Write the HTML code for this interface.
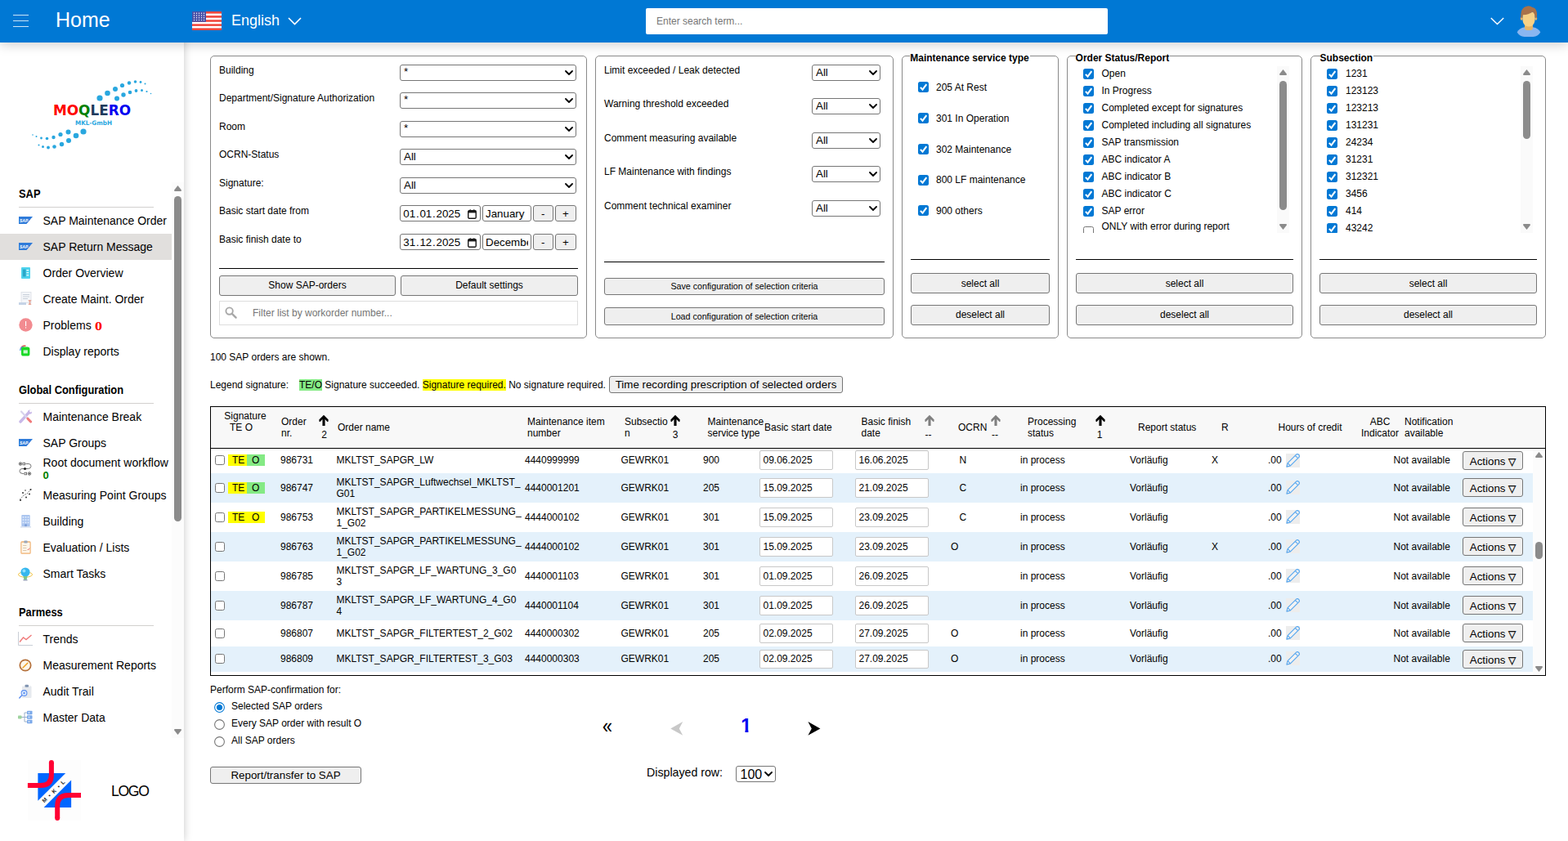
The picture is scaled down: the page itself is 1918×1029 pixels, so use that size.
<!DOCTYPE html>
<html lang="en">
<head>
<meta charset="utf-8">
<title>Home</title>
<style>

*{box-sizing:border-box;margin:0;padding:0}
svg{display:block}
html,body{width:1918px;height:1029px;overflow:hidden;background:#fff}
body{font-family:"Liberation Sans",sans-serif;font-size:12px;color:#000;position:relative}
.t{position:absolute;white-space:nowrap}
.hdr{position:absolute;left:0;top:0;width:1918px;height:52px;background:#0078d4;box-shadow:0 3px 13px rgba(0,0,0,.18);z-index:5}
.side{position:absolute;left:0;top:52px;width:225px;height:977px;background:#fff;box-shadow:0 0 10px rgba(0,0,0,.22);z-index:3}
.main{position:absolute;left:0;top:0;width:1918px;height:1029px}
.panel{position:absolute;border:1px solid #8a8a8a;border-radius:5px}
.sel{position:absolute;border:1px solid #767676;border-radius:3px;background:#fff;white-space:nowrap;overflow:hidden}
.sel .chev{position:absolute;right:3px;top:50%;margin-top:-3px}
.btn{position:absolute;border:1px solid #767676;border-radius:3px;background:#efefef;text-align:center;white-space:nowrap}
.inp{position:absolute;border:1px solid #767676;border-radius:3px;background:#fff;white-space:nowrap;overflow:hidden}
.dinp{position:absolute;border:1px solid #c8c8c8;border-radius:2px;background:#fff;white-space:nowrap;overflow:hidden}
.cb{position:absolute;border:1px solid #767676;border-radius:2.5px;background:#fff}
.cb.on{border:none;background:#0078d4}
.cb svg{display:block}
.hr{position:absolute;height:1px;background:#000}
.nav{position:absolute;left:0;width:210px;height:32px}
.nav.sel-item{background:#e1dfdd}
.leg{position:absolute;background:#fff;font-weight:bold;font-size:12px;line-height:14px;white-space:nowrap;padding:0 1px 0 0}

</style>
</head>
<body>
<div class="hdr">
<div class="" style="position:absolute;left:16px;top:17.5px;width:19px;height:1.5px;background:rgba(255,255,255,.8)"></div>
<div class="" style="position:absolute;left:16px;top:24.5px;width:19px;height:1.5px;background:rgba(255,255,255,.8)"></div>
<div class="" style="position:absolute;left:16px;top:31.5px;width:19px;height:1.5px;background:rgba(255,255,255,.8)"></div>
<div class="t " style="left:68px;top:8.5px;font-size:25px;line-height:30px;color:#fff;">Home</div>
<svg style="position:absolute;left:235px;top:14px" width="36" height="23" viewBox="0 0 36 23">
<rect width="36" height="23" fill="#fff"/>
<g fill="#f0483e"><rect y="0" width="36" height="2.6"/><rect y="5.1" width="36" height="2.6"/><rect y="10.2" width="36" height="2.6"/><rect y="15.3" width="36" height="2.6"/><rect y="20.4" width="36" height="2.6"/></g>
<rect width="17" height="12.8" fill="#4a52a8"/>
<g fill="#fff"><circle cx="2.5" cy="2.2" r=".7"/><circle cx="5.5" cy="2.2" r=".7"/><circle cx="8.5" cy="2.2" r=".7"/><circle cx="11.5" cy="2.2" r=".7"/><circle cx="14.5" cy="2.2" r=".7"/>
<circle cx="2.5" cy="5" r=".7"/><circle cx="5.5" cy="5" r=".7"/><circle cx="8.5" cy="5" r=".7"/><circle cx="11.5" cy="5" r=".7"/><circle cx="14.5" cy="5" r=".7"/>
<circle cx="2.5" cy="7.8" r=".7"/><circle cx="5.5" cy="7.8" r=".7"/><circle cx="8.5" cy="7.8" r=".7"/><circle cx="11.5" cy="7.8" r=".7"/><circle cx="14.5" cy="7.8" r=".7"/>
<circle cx="2.5" cy="10.6" r=".7"/><circle cx="5.5" cy="10.6" r=".7"/><circle cx="8.5" cy="10.6" r=".7"/><circle cx="11.5" cy="10.6" r=".7"/><circle cx="14.5" cy="10.6" r=".7"/></g>
</svg>
<div class="t " style="left:283px;top:13.5px;font-size:18px;line-height:22px;color:#fff;">English</div>
<svg style="position:absolute;left:352px;top:21px" width="17" height="10" viewBox="0 0 17 10"><path d="M1 1 L8.5 8.5 L16 1" fill="none" stroke="#fff" stroke-width="1.6"/></svg>
<div class="" style="position:absolute;left:790px;top:10px;width:565px;height:32px;background:#fff;border-radius:2px"></div>
<div class="t " style="left:803px;top:19px;font-size:12px;line-height:14px;color:#757575;">Enter search term...</div>
<svg style="position:absolute;left:1823px;top:21px" width="17" height="10" viewBox="0 0 17 10"><path d="M0.8 1 L8.5 8.6 L16.2 1" fill="none" stroke="#fff" stroke-width="1.4"/></svg>
<svg style="position:absolute;left:1855px;top:6px" width="30" height="40" viewBox="0 0 30 40">
<path d="M0.7 33.4 Q3 28.6 10 27.3 L20 27.3 Q27 28.6 29.3 33.4 Q26 38.6 20.5 39 L9.5 39 Q4 38.6 0.7 33.4 Z" fill="#8ab6f0"/>
<path d="M10 23 L10 27.5 Q10 30.9 13 30.9 L17 30.9 Q20 30.9 20 27.5 L20 23 Z" fill="#e6b566"/>
<ellipse cx="6.2" cy="16.6" rx="1.4" ry="2.2" fill="#e9b667"/><ellipse cx="23.8" cy="16.6" rx="1.4" ry="2.2" fill="#e9b667"/>
<path d="M7.5 12 L7.5 18 Q7.5 23 11 25.4 Q15 27.6 19 25.4 Q22.5 23 22.5 18 L22.5 8 Z" fill="#f7d186"/>
<path d="M5.6 16.4 Q4.2 6.5 9.6 2.8 Q15 -0.6 19.6 3 Q23.4 3.6 24.6 8 Q25.6 12 24.4 16.4 L22.6 15.4 Q22.8 11 19.6 8.4 Q15 12 7.9 12.2 Q7.2 13.8 7.4 15.4 Z" fill="#a8714a"/>
</svg>
</div>
<div class="side" style="top:0;height:1029px">
<svg style="position:absolute;left:36px;top:96px" width="154" height="90" viewBox="0 0 154 90">
<g fill="#29a7df">
<circle cx="86" cy="24" r="3.6"/><circle cx="95.5" cy="18" r="3.3"/><circle cx="105" cy="13" r="3"/><circle cx="113.5" cy="8.5" r="2.6"/><circle cx="122" cy="5.5" r="2.2"/><circle cx="129.5" cy="4" r="1.8"/><circle cx="136" cy="4.5" r="1.4"/><circle cx="141.5" cy="6.5" r="1"/>
<circle cx="107" cy="24.5" r="3"/><circle cx="115" cy="20" r="2.7"/><circle cx="123" cy="17" r="2.3"/><circle cx="130.5" cy="15" r="1.9"/><circle cx="137.5" cy="14.5" r="1.5"/><circle cx="143.5" cy="16" r="1.1"/><circle cx="148.5" cy="18.5" r=".8"/>
<circle cx="66" cy="65" r="3.6"/><circle cx="57" cy="70" r="3.3"/><circle cx="47.5" cy="65.5" r="3"/><circle cx="38" cy="68.5" r="2.6"/><circle cx="29.5" cy="72" r="2.2"/><circle cx="21.5" cy="73.5" r="1.8"/><circle cx="14.5" cy="73" r="1.4"/><circle cx="8.5" cy="71" r="1"/><circle cx="4" cy="69" r=".8"/>
<circle cx="48" cy="76" r="3"/><circle cx="39.5" cy="80.5" r="2.7"/><circle cx="30.5" cy="83.5" r="2.3"/><circle cx="23" cy="84.5" r="1.9"/><circle cx="16.5" cy="83.5" r="1.5"/><circle cx="11.5" cy="81.5" r="1"/>
</g>
<text x="29" y="45" font-family="DejaVu Sans, Liberation Sans, sans-serif" font-weight="bold" font-size="17.5" textLength="95" lengthAdjust="spacingAndGlyphs"><tspan fill="#ff0000">MO</tspan><tspan fill="#008000">Q</tspan><tspan fill="#1d3a5c">LE</tspan><tspan fill="#0000f0">RO</tspan></text>
<text x="56" y="57" font-family="DejaVu Sans, Liberation Sans, sans-serif" font-weight="bold" font-size="7.5" fill="#29a7df" textLength="45" lengthAdjust="spacingAndGlyphs">MKL-GmbH</text>
</svg>
<div class="t " style="left:23px;top:228.5px;font-size:14px;line-height:16px;font-weight:bold;transform:scaleX(0.92);transform-origin:0 50%;">SAP</div>
<div class="" style="position:absolute;left:23px;top:253px;width:165px;height:1px;background:#d2d0ce"></div>
<div style="position:absolute;left:22.5px;top:265px;width:17px;height:9px"><svg width="17" height="9" viewBox="0 0 17 9"><path d="M0 0 H17 L9.5 9 H0Z" fill="#2f7bd9"/><text x="1" y="6.9" font-family="Liberation Sans, sans-serif" font-weight="bold" font-style="italic" font-size="5.6" fill="#fff" textLength="10.2" lengthAdjust="spacingAndGlyphs">SAP</text></svg></div>
<div class="t " style="left:52.5px;top:261px;font-size:14px;line-height:18px;">SAP Maintenance Order</div>
<div class="" style="position:absolute;left:0px;top:286px;width:210px;height:32px;background:#e1dfdd"></div>
<div style="position:absolute;left:22.5px;top:297px;width:17px;height:9px"><svg width="17" height="9" viewBox="0 0 17 9"><path d="M0 0 H17 L9.5 9 H0Z" fill="#2f7bd9"/><text x="1" y="6.9" font-family="Liberation Sans, sans-serif" font-weight="bold" font-style="italic" font-size="5.6" fill="#fff" textLength="10.2" lengthAdjust="spacingAndGlyphs">SAP</text></svg></div>
<div class="t " style="left:52.5px;top:293px;font-size:14px;line-height:18px;">SAP Return Message</div>
<div style="position:absolute;left:25.5px;top:327px;width:11px;height:14px"><svg width="11" height="14" viewBox="0 0 12 14" preserveAspectRatio="none"><rect width="12" height="14" rx="1" fill="#4fd3ee"/><rect x="2" y="2.5" width="4" height="9" fill="#2aa7c8"/><rect x="7" y="3" width="3" height="1.3" fill="#e9fbff"/><rect x="7" y="6" width="3" height="1.3" fill="#e9fbff"/><rect x="7" y="9" width="3" height="1.3" fill="#e9fbff"/></svg></div>
<div class="t " style="left:52.5px;top:325px;font-size:14px;line-height:18px;">Order Overview</div>
<div style="position:absolute;left:22.5px;top:357px;width:17px;height:17px"><svg width="17" height="17" viewBox="0 0 17 17"><rect x="3" y="0.5" width="12" height="13" fill="#f4f6f9" stroke="#d6dbe3" stroke-width=".7"/><rect x="5" y="3" width="8" height="1" fill="#c9d0da"/><rect x="5" y="5.5" width="8" height="1" fill="#c9d0da"/><rect x="5" y="8" width="6" height="1" fill="#c9d0da"/><path d="M0 13 H9 V16 H0Z" fill="#c5d3e6"/><path d="M11.5 10 h4 l-1.5 3 l1.5 3 h-4 l1.5 -3z" fill="#e6a89a"/></svg></div>
<div class="t " style="left:52.5px;top:357px;font-size:14px;line-height:18px;">Create Maint. Order</div>
<div style="position:absolute;left:22.5px;top:389px;width:17px;height:17px"><svg width="17" height="17" viewBox="0 0 17 17"><circle cx="8.5" cy="8.5" r="8.2" fill="#f28b90"/><rect x="8" y="4" width="1.1" height="6" fill="#fff"/><rect x="8" y="11.3" width="1.1" height="1.3" fill="#fff"/></svg></div>
<div class="t " style="left:52.5px;top:389px;font-size:14px;line-height:18px;">Problems <span style="font-family:'Liberation Serif',serif;font-weight:bold;color:#f00;font-size:15.5px;line-height:10px;position:relative;top:1px;display:inline-block;transform:scaleX(1.16);transform-origin:0 50%">0</span></div>
<div style="position:absolute;left:24px;top:422px;width:14px;height:15px"><svg width="14" height="15" viewBox="0 0 14 15"><path d="M1.6 5.5 Q2 0.8 7.5 1.2" fill="none" stroke="#e0605a" stroke-width="1.6"/><path d="M0.8 7 Q0.6 3 4.5 2.4" fill="none" stroke="#5b8def" stroke-width="1.3"/><rect x="2" y="2.4" width="10.4" height="11.2" rx="2.6" fill="#19d926"/><rect x="4.6" y="6.4" width="5.2" height="4" fill="#c9f7cf"/></svg></div>
<div class="t " style="left:52.5px;top:421px;font-size:14px;line-height:18px;">Display reports</div>
<div class="t " style="left:23px;top:468.5px;font-size:14px;line-height:16px;font-weight:bold;transform:scaleX(0.92);transform-origin:0 50%;">Global Configuration</div>
<div class="" style="position:absolute;left:23px;top:493px;width:165px;height:1px;background:#d2d0ce"></div>
<div style="position:absolute;left:22.5px;top:501px;width:17px;height:17px"><svg width="17" height="17" viewBox="0 0 17 17"><path d="M2 15 L13 3" stroke="#c8b8e8" stroke-width="3.4" stroke-linecap="round"/><path d="M3 2.5 L14.5 15" stroke="#d8d2ec" stroke-width="2.2" stroke-linecap="round"/><path d="M11 11.2 L14.6 15" stroke="#f07a7a" stroke-width="3" stroke-linecap="round"/><circle cx="13.5" cy="3" r="2.6" fill="#c8b8e8"/><circle cx="14.6" cy="2" r="1.4" fill="#fff"/></svg></div>
<div class="t " style="left:52.5px;top:501px;font-size:14px;line-height:18px;">Maintenance Break</div>
<div style="position:absolute;left:22.5px;top:537px;width:17px;height:9px"><svg width="17" height="9" viewBox="0 0 17 9"><path d="M0 0 H17 L9.5 9 H0Z" fill="#2f7bd9"/><text x="1" y="6.9" font-family="Liberation Sans, sans-serif" font-weight="bold" font-style="italic" font-size="5.6" fill="#fff" textLength="10.2" lengthAdjust="spacingAndGlyphs">SAP</text></svg></div>
<div class="t " style="left:52.5px;top:533px;font-size:14px;line-height:18px;">SAP Groups</div>
<div style="position:absolute;left:22px;top:565px;width:18px;height:17px"><svg width="18" height="17" viewBox="0 0 18 17"><g fill="none" stroke="#555" stroke-width=".8"><circle cx="3" cy="2.5" r="1.8"/><rect x="6" y="1.2" width="2.6" height="2.6"/><path d="M9.5 2.5 H13 Q16 2.5 16 5.5 Q16 8.5 12 8.5 H5 Q2 8.5 2 11.5 Q2 14.5 6 14.5 H7"/><rect x="8" y="13.2" width="2.6" height="2.6"/><circle cx="14" cy="14.5" r="1.8"/></g><circle cx="3" cy="2.5" r=".9" fill="#333"/><circle cx="14" cy="14.5" r=".9" fill="#333"/><circle cx="8.5" cy="8.5" r="1.6" fill="#222"/></svg></div>
<div class="t " style="left:52.5px;top:558px;font-size:14px;line-height:16px;">Root document workflow</div>
<div class="t " style="left:52.5px;top:574px;font-size:13px;line-height:16px;color:#008000;font-weight:bold;">0</div>
<div style="position:absolute;left:22.5px;top:597px;width:17px;height:17px"><svg width="17" height="17" viewBox="0 0 17 17"><path d="M1.5 14 L6 9 L10 7 L15 1.5" fill="none" stroke="#444" stroke-width=".8" stroke-dasharray="1.6 1.2"/><g fill="#333"><circle cx="2" cy="15" r="1.1"/><circle cx="5" cy="6" r="1"/><circle cx="9" cy="11.5" r="1"/><circle cx="13" cy="7.5" r="1"/><circle cx="14.5" cy="2" r="1"/><circle cx="8" cy="3" r=".8"/></g></svg></div>
<div class="t " style="left:52.5px;top:597px;font-size:14px;line-height:18px;">Measuring Point Groups</div>
<div style="position:absolute;left:24.5px;top:629px;width:13px;height:17px"><svg width="13" height="17" viewBox="0 0 15 18" preserveAspectRatio="none"><rect x="1.5" y="1" width="12" height="15" rx="1" fill="#a9c4ef"/><rect x="0" y="16" width="15" height="1.6" fill="#d5dff0"/><g fill="#dfeafc"><rect x="3" y="3" width="2" height="2"/><rect x="6.5" y="3" width="2" height="2"/><rect x="10" y="3" width="2" height="2"/><rect x="3" y="6.5" width="2" height="2"/><rect x="6.5" y="6.5" width="2" height="2"/><rect x="10" y="6.5" width="2" height="2"/><rect x="3" y="10" width="2" height="2"/><rect x="6.5" y="10" width="2" height="2"/><rect x="10" y="10" width="2" height="2"/></g><rect x="6" y="13" width="3" height="3" fill="#7f9fd8"/></svg></div>
<div class="t " style="left:52.5px;top:629px;font-size:14px;line-height:18px;">Building</div>
<div style="position:absolute;left:24.5px;top:661px;width:13px;height:17px"><svg width="13" height="17" viewBox="0 0 15 17" preserveAspectRatio="none"><rect x="1" y="2" width="13" height="14.2" rx="1" fill="#fdf6ea" stroke="#f0b070" stroke-width="1.3"/><rect x="5" y="0.5" width="5" height="3" rx="1" fill="#9aa7b8"/><rect x="3.5" y="6" width="5" height="1" fill="#d9c7ae"/><rect x="3.5" y="9" width="5" height="1" fill="#d9c7ae"/><rect x="3.5" y="12" width="5" height="1" fill="#d9c7ae"/><path d="M10 11 l1 1 l2 -2.4" fill="none" stroke="#e86a6a" stroke-width="1"/></svg></div>
<div class="t " style="left:52.5px;top:661px;font-size:14px;line-height:18px;">Evaluation / Lists</div>
<div style="position:absolute;left:22px;top:693px;width:18px;height:18px"><svg width="18" height="18" viewBox="0 0 18 18"><ellipse cx="9" cy="10" rx="8.5" ry="3.2" fill="none" stroke="#f3c64b" stroke-width="1"/><circle cx="9" cy="7" r="5.6" fill="#35b7ee"/><circle cx="7.4" cy="5.4" r="2" fill="#8fe0ff"/><path d="M6.5 12 h5 l-.8 4 h-3.4z" fill="#7cc48a"/><rect x="6.5" y="16" width="5" height="1.5" fill="#9aa7b8"/></svg></div>
<div class="t " style="left:52.5px;top:693px;font-size:14px;line-height:18px;">Smart Tasks</div>
<div class="t " style="left:23px;top:740.5px;font-size:14px;line-height:16px;font-weight:bold;transform:scaleX(0.92);transform-origin:0 50%;">Parmess</div>
<div class="" style="position:absolute;left:23px;top:765px;width:165px;height:1px;background:#d2d0ce"></div>
<div style="position:absolute;left:22px;top:773px;width:18px;height:17px"><svg width="18" height="17" viewBox="0 0 18 17"><path d="M0.5 0 V16.5 H18" fill="none" stroke="#c9ced6" stroke-width="1"/><path d="M2 12.5 L6.5 7 L10 9.5 L16.5 4" fill="none" stroke="#f07a7a" stroke-width="1.4"/></svg></div>
<div class="t " style="left:52.5px;top:773px;font-size:14px;line-height:18px;">Trends</div>
<div style="position:absolute;left:23px;top:806px;width:16px;height:16px"><svg width="16" height="16" viewBox="0 0 16 16"><circle cx="8" cy="8" r="6.7" fill="#fdf6ea" stroke="#b4703a" stroke-width="1.7"/><path d="M5 11 L10.8 5.2" stroke="#f0a020" stroke-width="1.5" stroke-linecap="round"/></svg></div>
<div class="t " style="left:52.5px;top:805px;font-size:14px;line-height:18px;">Measurement Reports</div>
<div style="position:absolute;left:23px;top:837px;width:16px;height:18px"><svg width="16" height="18" viewBox="0 0 16 18"><rect x="4" y="2.5" width="11.5" height="14.5" rx="1" fill="#e6e9ee"/><rect x="7.5" y="0.8" width="4.5" height="3" rx="1" fill="#7f93b0"/><circle cx="6.5" cy="11" r="3.4" fill="#dfeeff" stroke="#5b8def" stroke-width="1.1"/><circle cx="6.5" cy="11" r="1.2" fill="#5b8def"/><path d="M4 13.6 L0.8 17" stroke="#5b8def" stroke-width="1.5" stroke-linecap="round"/></svg></div>
<div class="t " style="left:52.5px;top:837px;font-size:14px;line-height:18px;">Audit Trail</div>
<div style="position:absolute;left:22px;top:869px;width:18px;height:17px"><svg width="18" height="17" viewBox="0 0 18 17"><g fill="none" stroke="#9bb0c9" stroke-width="1"><path d="M4 8.5 H8 M8 3 V14 M8 3 H11 M8 8.5 H11 M8 14 H11"/></g><rect x="0" y="6.5" width="4.5" height="4" rx=".8" fill="#9fd39f"/><g fill="#7ba9ea"><rect x="11" y="0.8" width="6.5" height="4.4" rx=".8"/><rect x="11" y="6.3" width="6.5" height="4.4" rx=".8"/><rect x="11" y="11.8" width="6.5" height="4.4" rx=".8"/></g><g fill="#dce9fb"><rect x="12.5" y="2.2" width="2" height="1.6"/><rect x="12.5" y="7.7" width="2" height="1.6"/><rect x="12.5" y="13.2" width="2" height="1.6"/></g></svg></div>
<div class="t " style="left:52.5px;top:869px;font-size:14px;line-height:18px;">Master Data</div>
<div style="position:absolute;left:210px;top:223px;width:15px;height:680px;background:#fcfcfc"><svg style="position:absolute;left:3px;top:4px" width="9" height="7" viewBox="0 0 9 7"><path d="M4.5 0 L8.7 5.3 Q9.4 7 7.9 7 L1.1 7 Q-0.4 7 0.3 5.3 Z" fill="#8b8b8b"/></svg><div style="position:absolute;left:3px;top:17px;width:9px;height:398px;border-radius:4.5px;background:#8b8b8b"></div><svg style="position:absolute;left:3px;bottom:4px" width="9" height="7" viewBox="0 0 9 7"><path d="M4.5 7 L8.7 1.7 Q9.4 0 7.9 0 L1.1 0 Q-0.4 0 0.3 1.7 Z" fill="#8b8b8b"/></svg></div>
<svg style="position:absolute;left:33px;top:929px" width="68" height="77" viewBox="0 0 68 77">
<rect x="1" y="1" width="65" height="74" fill="#fdfdfd"/>
<path d="M13.4 16.9 H47.2 L13.4 50.7 Z" fill="#0066ff"/><path d="M54.1 25.5 V59 H20.6 Z" fill="#0066ff"/>
<path d="M29.9 4 V19 Q29.9 32.1 16.8 32.1 H0.9" fill="none" stroke="#ff0033" stroke-width="6"/><circle cx="29.9" cy="4" r="3" fill="#ff0033"/>
<path d="M66 44 H50.3 Q37.2 44 37.2 57.1 V72" fill="none" stroke="#ff0033" stroke-width="6"/><circle cx="37.2" cy="72" r="3" fill="#ff0033"/>
<text transform="translate(21.3 53.6) rotate(-44.5)" font-family="Liberation Sans, sans-serif" font-weight="bold" font-size="6.6" fill="#222" textLength="36" lengthAdjust="spacing">M • K • L</text>
</svg>
<div class="t " style="left:136px;top:956.5px;font-size:17.6px;line-height:22px;letter-spacing:-1.3px;">LOGO</div>
</div>
<div class="main">
<div class="panel" style="left:257px;top:68px;width:461px;height:346px"></div>
<div class="t " style="left:268px;top:79px;font-size:12px;line-height:14px;">Building</div>
<div class="sel" style="left:489px;top:79px;width:216px;height:20px;font-size:13.333px;line-height:16px;padding-left:4px">*<svg class="chev" width="10" height="6" viewBox="0 0 10 6"><path d="M1 1 L5 5 L9 1" fill="none" stroke="#000" stroke-width="1.8" stroke-linecap="round" stroke-linejoin="round"/></svg></div>
<div class="t " style="left:268px;top:113px;font-size:12px;line-height:14px;">Department/Signature Authorization</div>
<div class="sel" style="left:489px;top:113px;width:216px;height:20px;font-size:13.333px;line-height:16px;padding-left:4px">*<svg class="chev" width="10" height="6" viewBox="0 0 10 6"><path d="M1 1 L5 5 L9 1" fill="none" stroke="#000" stroke-width="1.8" stroke-linecap="round" stroke-linejoin="round"/></svg></div>
<div class="t " style="left:268px;top:148px;font-size:12px;line-height:14px;">Room</div>
<div class="sel" style="left:489px;top:148px;width:216px;height:20px;font-size:13.333px;line-height:16px;padding-left:4px">*<svg class="chev" width="10" height="6" viewBox="0 0 10 6"><path d="M1 1 L5 5 L9 1" fill="none" stroke="#000" stroke-width="1.8" stroke-linecap="round" stroke-linejoin="round"/></svg></div>
<div class="t " style="left:268px;top:182px;font-size:12px;line-height:14px;">OCRN-Status</div>
<div class="sel" style="left:489px;top:182px;width:216px;height:20px;font-size:13.333px;line-height:18px;padding-left:4px">All<svg class="chev" width="10" height="6" viewBox="0 0 10 6"><path d="M1 1 L5 5 L9 1" fill="none" stroke="#000" stroke-width="1.8" stroke-linecap="round" stroke-linejoin="round"/></svg></div>
<div class="t " style="left:268px;top:217px;font-size:12px;line-height:14px;">Signature:</div>
<div class="sel" style="left:489px;top:217px;width:216px;height:20px;font-size:13.333px;line-height:18px;padding-left:4px">All<svg class="chev" width="10" height="6" viewBox="0 0 10 6"><path d="M1 1 L5 5 L9 1" fill="none" stroke="#000" stroke-width="1.8" stroke-linecap="round" stroke-linejoin="round"/></svg></div>
<div class="t " style="left:268px;top:251px;font-size:12px;line-height:14px;">Basic start date from</div>
<div class="inp" style="left:489px;top:251px;width:98.5px;height:20px;font-size:13.333px;line-height:20px;padding-left:3.3px">01<span style="margin:0 0.8px">.</span>01<span style="margin:0 0.8px">.</span>2025<svg style="position:absolute;right:4px;top:3.5px" width="11" height="12" viewBox="0 0 11 12"><rect x="0.75" y="1.8" width="9.5" height="9.4" rx="1.1" fill="none" stroke="#1a1a1a" stroke-width="1.4"/><rect x="0.75" y="1.8" width="9.5" height="2.6" fill="#1a1a1a"/><rect x="2.6" y="0.3" width="1.3" height="2" fill="#1a1a1a"/><rect x="7.1" y="0.3" width="1.3" height="2" fill="#1a1a1a"/></svg></div>
<div class="inp" style="left:590px;top:251px;width:59.5px;height:20px;font-size:13.333px;line-height:20px;padding:0 3px"><div style="overflow:hidden;height:18px">January</div></div>
<div class="btn" style="left:652px;top:251px;width:24.5px;height:20px;font-size:13.333px;line-height:20px">-</div>
<div class="btn" style="left:679px;top:251px;width:26px;height:20px;font-size:13.333px;line-height:20px">+</div>
<div class="t " style="left:268px;top:286px;font-size:12px;line-height:14px;">Basic finish date to</div>
<div class="inp" style="left:489px;top:286px;width:98.5px;height:20px;font-size:13.333px;line-height:20px;padding-left:3.3px">31<span style="margin:0 0.8px">.</span>12<span style="margin:0 0.8px">.</span>2025<svg style="position:absolute;right:4px;top:3.5px" width="11" height="12" viewBox="0 0 11 12"><rect x="0.75" y="1.8" width="9.5" height="9.4" rx="1.1" fill="none" stroke="#1a1a1a" stroke-width="1.4"/><rect x="0.75" y="1.8" width="9.5" height="2.6" fill="#1a1a1a"/><rect x="2.6" y="0.3" width="1.3" height="2" fill="#1a1a1a"/><rect x="7.1" y="0.3" width="1.3" height="2" fill="#1a1a1a"/></svg></div>
<div class="inp" style="left:590px;top:286px;width:59.5px;height:20px;font-size:13.333px;line-height:20px;padding:0 3px"><div style="overflow:hidden;height:18px">December</div></div>
<div class="btn" style="left:652px;top:286px;width:24.5px;height:20px;font-size:13.333px;line-height:20px">-</div>
<div class="btn" style="left:679px;top:286px;width:26px;height:20px;font-size:13.333px;line-height:20px">+</div>
<div class="hr" style="left:268px;top:328px;width:439px"></div>
<div class="btn" style="left:268px;top:337px;width:216px;height:25px;font-size:12px;line-height:23px">Show SAP-orders</div>
<div class="btn" style="left:490px;top:337px;width:217px;height:25px;font-size:12px;line-height:23px">Default settings</div>
<div class="" style="position:absolute;left:268px;top:368px;width:439px;height:30px;border:1px solid #ddd;background:#fff"></div>
<svg style="position:absolute;left:275px;top:375px" width="16" height="16" viewBox="0 0 16 16"><circle cx="5.6" cy="5.6" r="4.2" fill="none" stroke="#a8a8a8" stroke-width="1.9"/><path d="M8.8 8.8 L13.6 13.6" stroke="#a8a8a8" stroke-width="2.4" stroke-linecap="round"/></svg>
<div class="t " style="left:309px;top:376px;font-size:12px;line-height:14px;color:#757575;">Filter list by workorder number...</div>
<div class="panel" style="left:728px;top:68px;width:365px;height:346px"></div>
<div class="t " style="left:739px;top:79px;font-size:12px;line-height:14px;">Limit exceeded / Leak detected</div>
<div class="sel" style="left:993px;top:79px;width:84px;height:20px;font-size:13.333px;line-height:18px;padding-left:4px">All<svg class="chev" width="10" height="6" viewBox="0 0 10 6"><path d="M1 1 L5 5 L9 1" fill="none" stroke="#000" stroke-width="1.8" stroke-linecap="round" stroke-linejoin="round"/></svg></div>
<div class="t " style="left:739px;top:120px;font-size:12px;line-height:14px;">Warning threshold exceeded</div>
<div class="sel" style="left:993px;top:120px;width:84px;height:20px;font-size:13.333px;line-height:18px;padding-left:4px">All<svg class="chev" width="10" height="6" viewBox="0 0 10 6"><path d="M1 1 L5 5 L9 1" fill="none" stroke="#000" stroke-width="1.8" stroke-linecap="round" stroke-linejoin="round"/></svg></div>
<div class="t " style="left:739px;top:162px;font-size:12px;line-height:14px;">Comment measuring available</div>
<div class="sel" style="left:993px;top:162px;width:84px;height:20px;font-size:13.333px;line-height:18px;padding-left:4px">All<svg class="chev" width="10" height="6" viewBox="0 0 10 6"><path d="M1 1 L5 5 L9 1" fill="none" stroke="#000" stroke-width="1.8" stroke-linecap="round" stroke-linejoin="round"/></svg></div>
<div class="t " style="left:739px;top:203px;font-size:12px;line-height:14px;">LF Maintenance with findings</div>
<div class="sel" style="left:993px;top:203px;width:84px;height:20px;font-size:13.333px;line-height:18px;padding-left:4px">All<svg class="chev" width="10" height="6" viewBox="0 0 10 6"><path d="M1 1 L5 5 L9 1" fill="none" stroke="#000" stroke-width="1.8" stroke-linecap="round" stroke-linejoin="round"/></svg></div>
<div class="t " style="left:739px;top:245px;font-size:12px;line-height:14px;">Comment technical examiner</div>
<div class="sel" style="left:993px;top:245px;width:84px;height:20px;font-size:13.333px;line-height:18px;padding-left:4px">All<svg class="chev" width="10" height="6" viewBox="0 0 10 6"><path d="M1 1 L5 5 L9 1" fill="none" stroke="#000" stroke-width="1.8" stroke-linecap="round" stroke-linejoin="round"/></svg></div>
<div class="hr" style="left:739px;top:320px;width:343px"></div>
<div class="btn" style="left:739px;top:340px;width:343px;height:21px;font-size:10.667px;line-height:19px">Save configuration of selection criteria</div>
<div class="btn" style="left:739px;top:376px;width:343px;height:22px;font-size:10.667px;line-height:20px">Load configuration of selection criteria</div>
<div class="panel" style="left:1103px;top:68px;width:192px;height:346px"></div>
<div class="leg" style="left:1113.25px;top:64px">Maintenance service type</div>
<div class="cb on" style="left:1122.5px;top:100px;width:13px;height:13px"><svg width="13" height="13" viewBox="0 0 13 13"><path d="M2.9 6.9 L5.5 9.7 L10.3 3.1" fill="none" stroke="#fff" stroke-width="2.1" stroke-linecap="butt" stroke-linejoin="miter"/></svg></div>
<div class="t " style="left:1145px;top:99.5px;font-size:12px;line-height:14px;">205 At Rest</div>
<div class="cb on" style="left:1122.5px;top:138px;width:13px;height:13px"><svg width="13" height="13" viewBox="0 0 13 13"><path d="M2.9 6.9 L5.5 9.7 L10.3 3.1" fill="none" stroke="#fff" stroke-width="2.1" stroke-linecap="butt" stroke-linejoin="miter"/></svg></div>
<div class="t " style="left:1145px;top:137.5px;font-size:12px;line-height:14px;">301 In Operation</div>
<div class="cb on" style="left:1122.5px;top:176px;width:13px;height:13px"><svg width="13" height="13" viewBox="0 0 13 13"><path d="M2.9 6.9 L5.5 9.7 L10.3 3.1" fill="none" stroke="#fff" stroke-width="2.1" stroke-linecap="butt" stroke-linejoin="miter"/></svg></div>
<div class="t " style="left:1145px;top:175.5px;font-size:12px;line-height:14px;">302 Maintenance</div>
<div class="cb on" style="left:1122.5px;top:213.5px;width:13px;height:13px"><svg width="13" height="13" viewBox="0 0 13 13"><path d="M2.9 6.9 L5.5 9.7 L10.3 3.1" fill="none" stroke="#fff" stroke-width="2.1" stroke-linecap="butt" stroke-linejoin="miter"/></svg></div>
<div class="t " style="left:1145px;top:212.5px;font-size:12px;line-height:14px;">800 LF maintenance</div>
<div class="cb on" style="left:1122.5px;top:251px;width:13px;height:13px"><svg width="13" height="13" viewBox="0 0 13 13"><path d="M2.9 6.9 L5.5 9.7 L10.3 3.1" fill="none" stroke="#fff" stroke-width="2.1" stroke-linecap="butt" stroke-linejoin="miter"/></svg></div>
<div class="t " style="left:1145px;top:250.5px;font-size:12px;line-height:14px;">900 others</div>
<div class="hr" style="left:1114px;top:317px;width:170px"></div>
<div class="btn" style="left:1114px;top:334px;width:170px;height:25px;font-size:12px;line-height:25px">select all</div>
<div class="btn" style="left:1114px;top:373px;width:170px;height:25px;font-size:12px;line-height:23px">deselect all</div>
<div class="panel" style="left:1305px;top:68px;width:288px;height:346px"></div>
<div class="leg" style="left:1315.6px;top:64px">Order Status/Report</div>
<div class="cb on" style="left:1325px;top:84px;width:13px;height:13px"><svg width="13" height="13" viewBox="0 0 13 13"><path d="M2.9 6.9 L5.5 9.7 L10.3 3.1" fill="none" stroke="#fff" stroke-width="2.1" stroke-linecap="butt" stroke-linejoin="miter"/></svg></div>
<div class="t " style="left:1347.5px;top:83px;font-size:12px;line-height:14px;">Open</div>
<div class="cb on" style="left:1325px;top:105px;width:13px;height:13px"><svg width="13" height="13" viewBox="0 0 13 13"><path d="M2.9 6.9 L5.5 9.7 L10.3 3.1" fill="none" stroke="#fff" stroke-width="2.1" stroke-linecap="butt" stroke-linejoin="miter"/></svg></div>
<div class="t " style="left:1347.5px;top:104px;font-size:12px;line-height:14px;">In Progress</div>
<div class="cb on" style="left:1325px;top:126px;width:13px;height:13px"><svg width="13" height="13" viewBox="0 0 13 13"><path d="M2.9 6.9 L5.5 9.7 L10.3 3.1" fill="none" stroke="#fff" stroke-width="2.1" stroke-linecap="butt" stroke-linejoin="miter"/></svg></div>
<div class="t " style="left:1347.5px;top:125px;font-size:12px;line-height:14px;">Completed except for signatures</div>
<div class="cb on" style="left:1325px;top:147px;width:13px;height:13px"><svg width="13" height="13" viewBox="0 0 13 13"><path d="M2.9 6.9 L5.5 9.7 L10.3 3.1" fill="none" stroke="#fff" stroke-width="2.1" stroke-linecap="butt" stroke-linejoin="miter"/></svg></div>
<div class="t " style="left:1347.5px;top:146px;font-size:12px;line-height:14px;">Completed including all signatures</div>
<div class="cb on" style="left:1325px;top:168px;width:13px;height:13px"><svg width="13" height="13" viewBox="0 0 13 13"><path d="M2.9 6.9 L5.5 9.7 L10.3 3.1" fill="none" stroke="#fff" stroke-width="2.1" stroke-linecap="butt" stroke-linejoin="miter"/></svg></div>
<div class="t " style="left:1347.5px;top:167px;font-size:12px;line-height:14px;">SAP transmission</div>
<div class="cb on" style="left:1325px;top:189px;width:13px;height:13px"><svg width="13" height="13" viewBox="0 0 13 13"><path d="M2.9 6.9 L5.5 9.7 L10.3 3.1" fill="none" stroke="#fff" stroke-width="2.1" stroke-linecap="butt" stroke-linejoin="miter"/></svg></div>
<div class="t " style="left:1347.5px;top:188px;font-size:12px;line-height:14px;">ABC indicator A</div>
<div class="cb on" style="left:1325px;top:210px;width:13px;height:13px"><svg width="13" height="13" viewBox="0 0 13 13"><path d="M2.9 6.9 L5.5 9.7 L10.3 3.1" fill="none" stroke="#fff" stroke-width="2.1" stroke-linecap="butt" stroke-linejoin="miter"/></svg></div>
<div class="t " style="left:1347.5px;top:209px;font-size:12px;line-height:14px;">ABC indicator B</div>
<div class="cb on" style="left:1325px;top:231px;width:13px;height:13px"><svg width="13" height="13" viewBox="0 0 13 13"><path d="M2.9 6.9 L5.5 9.7 L10.3 3.1" fill="none" stroke="#fff" stroke-width="2.1" stroke-linecap="butt" stroke-linejoin="miter"/></svg></div>
<div class="t " style="left:1347.5px;top:230px;font-size:12px;line-height:14px;">ABC indicator C</div>
<div class="cb on" style="left:1325px;top:252px;width:13px;height:13px"><svg width="13" height="13" viewBox="0 0 13 13"><path d="M2.9 6.9 L5.5 9.7 L10.3 3.1" fill="none" stroke="#fff" stroke-width="2.1" stroke-linecap="butt" stroke-linejoin="miter"/></svg></div>
<div class="t " style="left:1347.5px;top:251px;font-size:12px;line-height:14px;">SAP error</div>
<div style="position:absolute;left:1325px;top:277px;width:13px;height:8px;overflow:hidden"><div class="cb" style="left:0;top:0;width:13px;height:13px"></div></div>
<div class="t " style="left:1347.5px;top:270px;font-size:12px;line-height:14px;">ONLY with error during report</div>
<div style="position:absolute;left:1562px;top:81px;width:15px;height:204px;background:#fafafa"><svg style="position:absolute;left:3px;top:4px" width="9" height="7" viewBox="0 0 9 7"><path d="M4.5 0 L8.7 5.3 Q9.4 7 7.9 7 L1.1 7 Q-0.4 7 0.3 5.3 Z" fill="#8b8b8b"/></svg><div style="position:absolute;left:3px;top:18px;width:9px;height:158px;border-radius:4.5px;background:#8b8b8b"></div><svg style="position:absolute;left:3px;bottom:4px" width="9" height="7" viewBox="0 0 9 7"><path d="M4.5 7 L8.7 1.7 Q9.4 0 7.9 0 L1.1 0 Q-0.4 0 0.3 1.7 Z" fill="#8b8b8b"/></svg></div>
<div class="hr" style="left:1316px;top:317px;width:266px"></div>
<div class="btn" style="left:1316px;top:334px;width:266px;height:25px;font-size:12px;line-height:25px">select all</div>
<div class="btn" style="left:1316px;top:373px;width:266px;height:25px;font-size:12px;line-height:23px">deselect all</div>
<div class="panel" style="left:1603px;top:68px;width:288px;height:346px"></div>
<div class="leg" style="left:1614.5px;top:64px">Subsection</div>
<div class="cb on" style="left:1623px;top:84px;width:13px;height:13px"><svg width="13" height="13" viewBox="0 0 13 13"><path d="M2.9 6.9 L5.5 9.7 L10.3 3.1" fill="none" stroke="#fff" stroke-width="2.1" stroke-linecap="butt" stroke-linejoin="miter"/></svg></div>
<div class="t " style="left:1646px;top:83px;font-size:12px;line-height:14px;">1231</div>
<div class="cb on" style="left:1623px;top:105px;width:13px;height:13px"><svg width="13" height="13" viewBox="0 0 13 13"><path d="M2.9 6.9 L5.5 9.7 L10.3 3.1" fill="none" stroke="#fff" stroke-width="2.1" stroke-linecap="butt" stroke-linejoin="miter"/></svg></div>
<div class="t " style="left:1646px;top:104px;font-size:12px;line-height:14px;">123123</div>
<div class="cb on" style="left:1623px;top:126px;width:13px;height:13px"><svg width="13" height="13" viewBox="0 0 13 13"><path d="M2.9 6.9 L5.5 9.7 L10.3 3.1" fill="none" stroke="#fff" stroke-width="2.1" stroke-linecap="butt" stroke-linejoin="miter"/></svg></div>
<div class="t " style="left:1646px;top:125px;font-size:12px;line-height:14px;">123213</div>
<div class="cb on" style="left:1623px;top:147px;width:13px;height:13px"><svg width="13" height="13" viewBox="0 0 13 13"><path d="M2.9 6.9 L5.5 9.7 L10.3 3.1" fill="none" stroke="#fff" stroke-width="2.1" stroke-linecap="butt" stroke-linejoin="miter"/></svg></div>
<div class="t " style="left:1646px;top:146px;font-size:12px;line-height:14px;">131231</div>
<div class="cb on" style="left:1623px;top:168px;width:13px;height:13px"><svg width="13" height="13" viewBox="0 0 13 13"><path d="M2.9 6.9 L5.5 9.7 L10.3 3.1" fill="none" stroke="#fff" stroke-width="2.1" stroke-linecap="butt" stroke-linejoin="miter"/></svg></div>
<div class="t " style="left:1646px;top:167px;font-size:12px;line-height:14px;">24234</div>
<div class="cb on" style="left:1623px;top:189px;width:13px;height:13px"><svg width="13" height="13" viewBox="0 0 13 13"><path d="M2.9 6.9 L5.5 9.7 L10.3 3.1" fill="none" stroke="#fff" stroke-width="2.1" stroke-linecap="butt" stroke-linejoin="miter"/></svg></div>
<div class="t " style="left:1646px;top:188px;font-size:12px;line-height:14px;">31231</div>
<div class="cb on" style="left:1623px;top:210px;width:13px;height:13px"><svg width="13" height="13" viewBox="0 0 13 13"><path d="M2.9 6.9 L5.5 9.7 L10.3 3.1" fill="none" stroke="#fff" stroke-width="2.1" stroke-linecap="butt" stroke-linejoin="miter"/></svg></div>
<div class="t " style="left:1646px;top:209px;font-size:12px;line-height:14px;">312321</div>
<div class="cb on" style="left:1623px;top:231px;width:13px;height:13px"><svg width="13" height="13" viewBox="0 0 13 13"><path d="M2.9 6.9 L5.5 9.7 L10.3 3.1" fill="none" stroke="#fff" stroke-width="2.1" stroke-linecap="butt" stroke-linejoin="miter"/></svg></div>
<div class="t " style="left:1646px;top:230px;font-size:12px;line-height:14px;">3456</div>
<div class="cb on" style="left:1623px;top:252px;width:13px;height:13px"><svg width="13" height="13" viewBox="0 0 13 13"><path d="M2.9 6.9 L5.5 9.7 L10.3 3.1" fill="none" stroke="#fff" stroke-width="2.1" stroke-linecap="butt" stroke-linejoin="miter"/></svg></div>
<div class="t " style="left:1646px;top:251px;font-size:12px;line-height:14px;">414</div>
<div style="position:absolute;left:1623px;top:273px;width:13px;height:12px;overflow:hidden">
<div class="cb on" style="left:0;top:0;width:13px;height:13px"><svg width="13" height="13" viewBox="0 0 13 13"><path d="M2.9 6.9 L5.5 9.7 L10.3 3.1" fill="none" stroke="#fff" stroke-width="2.1"/></svg></div></div>
<div style="position:absolute;left:1645px;top:271px;width:60px;height:14px;overflow:hidden"><div class="t" style="left:1px;top:1px;line-height:14px">43242</div></div>
<div style="position:absolute;left:1860px;top:81px;width:15px;height:204px;background:#fafafa"><svg style="position:absolute;left:3px;top:4px" width="9" height="7" viewBox="0 0 9 7"><path d="M4.5 0 L8.7 5.3 Q9.4 7 7.9 7 L1.1 7 Q-0.4 7 0.3 5.3 Z" fill="#8b8b8b"/></svg><div style="position:absolute;left:3px;top:18px;width:9px;height:71px;border-radius:4.5px;background:#8b8b8b"></div><svg style="position:absolute;left:3px;bottom:4px" width="9" height="7" viewBox="0 0 9 7"><path d="M4.5 7 L8.7 1.7 Q9.4 0 7.9 0 L1.1 0 Q-0.4 0 0.3 1.7 Z" fill="#8b8b8b"/></svg></div>
<div class="hr" style="left:1614px;top:317px;width:266px"></div>
<div class="btn" style="left:1614px;top:334px;width:266px;height:25px;font-size:12px;line-height:25px">select all</div>
<div class="btn" style="left:1614px;top:373px;width:266px;height:25px;font-size:12px;line-height:23px">deselect all</div>
<div class="t " style="left:257px;top:430px;font-size:12px;line-height:14px;">100 SAP orders are shown.</div>
<div class="t " style="left:257px;top:464px;font-size:12px;line-height:14px;">Legend signature:</div>
<div class="t " style="left:366px;top:464px;font-size:12px;line-height:14px;"><span style="background:#84ea84">TE/O</span> Signature succeeded. <span style="background:#ffff00">Signature required.</span> No signature required.</div>
<div class="btn" style="left:745px;top:460px;width:286px;height:21px;font-size:13.333px;line-height:19px">Time recording prescription of selected orders</div>
<div class="" style="position:absolute;left:257px;top:497px;width:1634px;height:330px;border:1px solid #000;background:#fff"></div>
<div class="" style="position:absolute;left:258px;top:498px;width:1632px;height:50px;background:#f8f8f8"></div>
<div class="" style="position:absolute;left:258px;top:548px;width:1632px;height:1px;background:#000"></div>
<div class="t " style="left:274.3px;top:501.7px;font-size:12px;line-height:14px;">Signature</div>
<div class="t " style="left:274.3px;top:515.7px;font-size:12px;line-height:14px;">  TE O</div>
<div class="t " style="left:344px;top:508.5px;font-size:12px;line-height:14px;">Order</div>
<div class="t " style="left:344px;top:522.5px;font-size:12px;line-height:14px;">nr.</div>
<svg style="position:absolute;left:390.1px;top:507px" width="12" height="15" viewBox="0 0 12 15"><path d="M6 0.8 L11.7 6.5 L11.4 9.1 L10.4 9.1 L7.55 6.1 L7.55 14 L4.45 14 L4.45 6.1 L1.6 9.1 L0.6 9.1 L0.3 6.5 Z" fill="#000"/></svg>
<div class="t " style="left:386.5px;top:524.5px;font-size:12px;line-height:14px;width:20px;text-align:center;">2</div>
<div class="t " style="left:413px;top:515.5px;font-size:12px;line-height:14px;">Order name</div>
<div class="t " style="left:645px;top:508.5px;font-size:12px;line-height:14px;">Maintenance item</div>
<div class="t " style="left:645px;top:522.5px;font-size:12px;line-height:14px;">number</div>
<div class="t " style="left:764px;top:508.5px;font-size:12px;line-height:14px;">Subsectio</div>
<div class="t " style="left:764px;top:522.5px;font-size:12px;line-height:14px;">n</div>
<svg style="position:absolute;left:820.4px;top:507px" width="12" height="15" viewBox="0 0 12 15"><path d="M6 0.8 L11.7 6.5 L11.4 9.1 L10.4 9.1 L7.55 6.1 L7.55 14 L4.45 14 L4.45 6.1 L1.6 9.1 L0.6 9.1 L0.3 6.5 Z" fill="#000"/></svg>
<div class="t " style="left:816px;top:524.5px;font-size:12px;line-height:14px;width:20px;text-align:center;">3</div>
<div class="t " style="left:865.5px;top:508.5px;font-size:12px;line-height:14px;">Maintenance</div>
<div class="t " style="left:865.5px;top:522.5px;font-size:12px;line-height:14px;">service type</div>
<div class="t " style="left:935px;top:515.5px;font-size:12px;line-height:14px;">Basic start date</div>
<div class="t " style="left:1053.5px;top:508.5px;font-size:12px;line-height:14px;">Basic finish</div>
<div class="t " style="left:1053.5px;top:522.5px;font-size:12px;line-height:14px;">date</div>
<svg style="position:absolute;left:1130.5px;top:507px" width="12" height="15" viewBox="0 0 12 15"><path d="M6 0.8 L11.7 6.5 L11.4 9.1 L10.4 9.1 L7.55 6.1 L7.55 14 L4.45 14 L4.45 6.1 L1.6 9.1 L0.6 9.1 L0.3 6.5 Z" fill="#808080"/></svg>
<div class="t " style="left:1125.5px;top:524.5px;font-size:12px;line-height:14px;width:20px;text-align:center;">--</div>
<div class="t " style="left:1172px;top:515.5px;font-size:12px;line-height:14px;">OCRN</div>
<svg style="position:absolute;left:1211.6px;top:507px" width="12" height="15" viewBox="0 0 12 15"><path d="M6 0.8 L11.7 6.5 L11.4 9.1 L10.4 9.1 L7.55 6.1 L7.55 14 L4.45 14 L4.45 6.1 L1.6 9.1 L0.6 9.1 L0.3 6.5 Z" fill="#808080"/></svg>
<div class="t " style="left:1207px;top:524.5px;font-size:12px;line-height:14px;width:20px;text-align:center;">--</div>
<div class="t " style="left:1257px;top:508.5px;font-size:12px;line-height:14px;">Processing</div>
<div class="t " style="left:1257px;top:522.5px;font-size:12px;line-height:14px;">status</div>
<svg style="position:absolute;left:1339.5px;top:507px" width="12" height="15" viewBox="0 0 12 15"><path d="M6 0.8 L11.7 6.5 L11.4 9.1 L10.4 9.1 L7.55 6.1 L7.55 14 L4.45 14 L4.45 6.1 L1.6 9.1 L0.6 9.1 L0.3 6.5 Z" fill="#000"/></svg>
<div class="t " style="left:1335.2px;top:524.5px;font-size:12px;line-height:14px;width:20px;text-align:center;">1</div>
<div class="t " style="left:1392px;top:515.5px;font-size:12px;line-height:14px;">Report status</div>
<div class="t " style="left:1494px;top:515.5px;font-size:12px;line-height:14px;">R</div>
<div class="t " style="left:1563.5px;top:515.5px;font-size:12px;line-height:14px;">Hours of credit</div>
<div class="t " style="left:1628px;top:508.5px;font-size:12px;line-height:14px;width:120px;text-align:center;">ABC</div>
<div class="t " style="left:1628px;top:522.5px;font-size:12px;line-height:14px;width:120px;text-align:center;">Indicator</div>
<div class="t " style="left:1718px;top:508.5px;font-size:12px;line-height:14px;">Notification</div>
<div class="t " style="left:1718px;top:522.5px;font-size:12px;line-height:14px;">available</div>
<div class="cb" style="left:262.5px;top:557px;width:12px;height:12px"></div>
<div class="" style="position:absolute;left:279px;top:556px;width:23px;height:14px;background:#ffff00"></div>
<div class="" style="position:absolute;left:302px;top:556px;width:22px;height:14px;background:#84ea84"></div>
<div class="t " style="left:284px;top:556px;font-size:12px;line-height:14px;">TE</div>
<div class="t " style="left:308px;top:556px;font-size:12px;line-height:14px;">O</div>
<div class="t " style="left:343px;top:556px;font-size:12px;line-height:14px;">986731</div>
<div class="t " style="left:411.5px;top:556px;font-size:12px;line-height:14px;">MKLTST_SAPGR_LW</div>
<div class="t " style="left:642px;top:556px;font-size:12px;line-height:14px;">4440999999</div>
<div class="t " style="left:759.5px;top:556px;font-size:12px;line-height:14px;">GEWRK01</div>
<div class="t " style="left:860px;top:556px;font-size:12px;line-height:14px;">900</div>
<div class="dinp" style="position:absolute;left:929px;top:551px;width:90px;height:24px;"></div>
<div class="t " style="left:933.5px;top:556px;font-size:12px;line-height:14px;">09.06.2025</div>
<div class="dinp" style="position:absolute;left:1046px;top:551px;width:90px;height:24px;"></div>
<div class="t " style="left:1050.5px;top:556px;font-size:12px;line-height:14px;">16.06.2025</div>
<div class="t " style="left:1173.5px;top:556px;font-size:12px;line-height:14px;">N</div>
<div class="t " style="left:1248px;top:556px;font-size:12px;line-height:14px;">in process</div>
<div class="t " style="left:1382px;top:556px;font-size:12px;line-height:14px;">Vorläufig</div>
<div class="t " style="left:1482px;top:556px;font-size:12px;line-height:14px;">X</div>
<div class="t " style="left:1551px;top:556px;font-size:12px;line-height:14px;">.00</div>
<div style="position:absolute;left:1572.5px;top:555px;width:17px;height:17px"><svg width="17" height="17" viewBox="0 0 17 17"><rect x="0" y="0" width="17" height="17" fill="#ededed"/><path d="M0.9 16.1 L2.1 11.6 L12.6 1.1 Q14.1 -0.1 15.6 1.4 Q17.1 2.9 15.9 4.4 L5.4 14.9 Z M11.3 2.4 L14.6 5.7 M2.1 11.6 L5.4 14.9" fill="#fff" fill-opacity=".35" stroke="#58a8f0" stroke-width="1.15" stroke-linejoin="round"/></svg></div>
<div class="t " style="left:1704.5px;top:556px;font-size:12px;line-height:14px;">Not available</div>
<div class="btn" style="left:1789px;top:552px;width:74px;height:23px;font-size:13.333px;line-height:23px">Actions <span style="font-size:12px;-webkit-text-stroke:0.35px #000;position:relative;top:-0.5px">▽</span></div>
<div class="" style="position:absolute;left:258px;top:579px;width:1617px;height:36px;background:#e4f1fb"></div>
<div class="cb" style="left:262.5px;top:591px;width:12px;height:12px"></div>
<div class="" style="position:absolute;left:279px;top:590px;width:23px;height:14px;background:#ffff00"></div>
<div class="" style="position:absolute;left:302px;top:590px;width:22px;height:14px;background:#84ea84"></div>
<div class="t " style="left:284px;top:590px;font-size:12px;line-height:14px;">TE</div>
<div class="t " style="left:308px;top:590px;font-size:12px;line-height:14px;">O</div>
<div class="t " style="left:343px;top:590px;font-size:12px;line-height:14px;">986747</div>
<div class="t " style="left:411.5px;top:583px;font-size:12px;line-height:14px;">MKLTST_SAPGR_Luftwechsel_MKLTST_</div>
<div class="t " style="left:411.5px;top:597px;font-size:12px;line-height:14px;">G01</div>
<div class="t " style="left:642px;top:590px;font-size:12px;line-height:14px;">4440001201</div>
<div class="t " style="left:759.5px;top:590px;font-size:12px;line-height:14px;">GEWRK01</div>
<div class="t " style="left:860px;top:590px;font-size:12px;line-height:14px;">205</div>
<div class="dinp" style="position:absolute;left:929px;top:585px;width:90px;height:24px;"></div>
<div class="t " style="left:933.5px;top:590px;font-size:12px;line-height:14px;">15.09.2025</div>
<div class="dinp" style="position:absolute;left:1046px;top:585px;width:90px;height:24px;"></div>
<div class="t " style="left:1050.5px;top:590px;font-size:12px;line-height:14px;">21.09.2025</div>
<div class="t " style="left:1173.5px;top:590px;font-size:12px;line-height:14px;">C</div>
<div class="t " style="left:1248px;top:590px;font-size:12px;line-height:14px;">in process</div>
<div class="t " style="left:1382px;top:590px;font-size:12px;line-height:14px;">Vorläufig</div>
<div class="t " style="left:1551px;top:590px;font-size:12px;line-height:14px;">.00</div>
<div style="position:absolute;left:1572.5px;top:588px;width:17px;height:17px"><svg width="17" height="17" viewBox="0 0 17 17"><rect x="0" y="0" width="17" height="17" fill="#ededed"/><path d="M0.9 16.1 L2.1 11.6 L12.6 1.1 Q14.1 -0.1 15.6 1.4 Q17.1 2.9 15.9 4.4 L5.4 14.9 Z M11.3 2.4 L14.6 5.7 M2.1 11.6 L5.4 14.9" fill="#fff" fill-opacity=".35" stroke="#58a8f0" stroke-width="1.15" stroke-linejoin="round"/></svg></div>
<div class="t " style="left:1704.5px;top:590px;font-size:12px;line-height:14px;">Not available</div>
<div class="btn" style="left:1789px;top:585px;width:74px;height:23px;font-size:13.333px;line-height:23px">Actions <span style="font-size:12px;-webkit-text-stroke:0.35px #000;position:relative;top:-0.5px">▽</span></div>
<div class="cb" style="left:262.5px;top:627px;width:12px;height:12px"></div>
<div class="" style="position:absolute;left:279px;top:626px;width:23px;height:14px;background:#ffff00"></div>
<div class="" style="position:absolute;left:302px;top:626px;width:22px;height:14px;background:#ffff00"></div>
<div class="t " style="left:284px;top:626px;font-size:12px;line-height:14px;">TE</div>
<div class="t " style="left:308px;top:626px;font-size:12px;line-height:14px;">O</div>
<div class="t " style="left:343px;top:626px;font-size:12px;line-height:14px;">986753</div>
<div class="t " style="left:411.5px;top:619px;font-size:12px;line-height:14px;">MKLTST_SAPGR_PARTIKELMESSUNG_</div>
<div class="t " style="left:411.5px;top:633px;font-size:12px;line-height:14px;">1_G02</div>
<div class="t " style="left:642px;top:626px;font-size:12px;line-height:14px;">4444000102</div>
<div class="t " style="left:759.5px;top:626px;font-size:12px;line-height:14px;">GEWRK01</div>
<div class="t " style="left:860px;top:626px;font-size:12px;line-height:14px;">301</div>
<div class="dinp" style="position:absolute;left:929px;top:621px;width:90px;height:24px;"></div>
<div class="t " style="left:933.5px;top:626px;font-size:12px;line-height:14px;">15.09.2025</div>
<div class="dinp" style="position:absolute;left:1046px;top:621px;width:90px;height:24px;"></div>
<div class="t " style="left:1050.5px;top:626px;font-size:12px;line-height:14px;">23.09.2025</div>
<div class="t " style="left:1173.5px;top:626px;font-size:12px;line-height:14px;">C</div>
<div class="t " style="left:1248px;top:626px;font-size:12px;line-height:14px;">in process</div>
<div class="t " style="left:1382px;top:626px;font-size:12px;line-height:14px;">Vorläufig</div>
<div class="t " style="left:1551px;top:626px;font-size:12px;line-height:14px;">.00</div>
<div style="position:absolute;left:1572.5px;top:624px;width:17px;height:17px"><svg width="17" height="17" viewBox="0 0 17 17"><rect x="0" y="0" width="17" height="17" fill="#ededed"/><path d="M0.9 16.1 L2.1 11.6 L12.6 1.1 Q14.1 -0.1 15.6 1.4 Q17.1 2.9 15.9 4.4 L5.4 14.9 Z M11.3 2.4 L14.6 5.7 M2.1 11.6 L5.4 14.9" fill="#fff" fill-opacity=".35" stroke="#58a8f0" stroke-width="1.15" stroke-linejoin="round"/></svg></div>
<div class="t " style="left:1704.5px;top:626px;font-size:12px;line-height:14px;">Not available</div>
<div class="btn" style="left:1789px;top:621px;width:74px;height:23px;font-size:13.333px;line-height:23px">Actions <span style="font-size:12px;-webkit-text-stroke:0.35px #000;position:relative;top:-0.5px">▽</span></div>
<div class="" style="position:absolute;left:258px;top:651px;width:1617px;height:36px;background:#e4f1fb"></div>
<div class="cb" style="left:262.5px;top:663px;width:12px;height:12px"></div>
<div class="t " style="left:343px;top:662px;font-size:12px;line-height:14px;">986763</div>
<div class="t " style="left:411.5px;top:655px;font-size:12px;line-height:14px;">MKLTST_SAPGR_PARTIKELMESSUNG_</div>
<div class="t " style="left:411.5px;top:669px;font-size:12px;line-height:14px;">1_G02</div>
<div class="t " style="left:642px;top:662px;font-size:12px;line-height:14px;">4444000102</div>
<div class="t " style="left:759.5px;top:662px;font-size:12px;line-height:14px;">GEWRK01</div>
<div class="t " style="left:860px;top:662px;font-size:12px;line-height:14px;">301</div>
<div class="dinp" style="position:absolute;left:929px;top:657px;width:90px;height:24px;"></div>
<div class="t " style="left:933.5px;top:662px;font-size:12px;line-height:14px;">15.09.2025</div>
<div class="dinp" style="position:absolute;left:1046px;top:657px;width:90px;height:24px;"></div>
<div class="t " style="left:1050.5px;top:662px;font-size:12px;line-height:14px;">23.09.2025</div>
<div class="t " style="left:1163px;top:662px;font-size:12px;line-height:14px;">O</div>
<div class="t " style="left:1248px;top:662px;font-size:12px;line-height:14px;">in process</div>
<div class="t " style="left:1382px;top:662px;font-size:12px;line-height:14px;">Vorläufig</div>
<div class="t " style="left:1482px;top:662px;font-size:12px;line-height:14px;">X</div>
<div class="t " style="left:1551px;top:662px;font-size:12px;line-height:14px;">.00</div>
<div style="position:absolute;left:1572.5px;top:660px;width:17px;height:17px"><svg width="17" height="17" viewBox="0 0 17 17"><rect x="0" y="0" width="17" height="17" fill="#ededed"/><path d="M0.9 16.1 L2.1 11.6 L12.6 1.1 Q14.1 -0.1 15.6 1.4 Q17.1 2.9 15.9 4.4 L5.4 14.9 Z M11.3 2.4 L14.6 5.7 M2.1 11.6 L5.4 14.9" fill="#fff" fill-opacity=".35" stroke="#58a8f0" stroke-width="1.15" stroke-linejoin="round"/></svg></div>
<div class="t " style="left:1704.5px;top:662px;font-size:12px;line-height:14px;">Not available</div>
<div class="btn" style="left:1789px;top:657px;width:74px;height:23px;font-size:13.333px;line-height:23px">Actions <span style="font-size:12px;-webkit-text-stroke:0.35px #000;position:relative;top:-0.5px">▽</span></div>
<div class="cb" style="left:262.5px;top:699px;width:12px;height:12px"></div>
<div class="t " style="left:343px;top:698px;font-size:12px;line-height:14px;">986785</div>
<div class="t " style="left:411.5px;top:691px;font-size:12px;line-height:14px;">MKLTST_SAPGR_LF_WARTUNG_3_G0</div>
<div class="t " style="left:411.5px;top:705px;font-size:12px;line-height:14px;">3</div>
<div class="t " style="left:642px;top:698px;font-size:12px;line-height:14px;">4440001103</div>
<div class="t " style="left:759.5px;top:698px;font-size:12px;line-height:14px;">GEWRK01</div>
<div class="t " style="left:860px;top:698px;font-size:12px;line-height:14px;">301</div>
<div class="dinp" style="position:absolute;left:929px;top:693px;width:90px;height:24px;"></div>
<div class="t " style="left:933.5px;top:698px;font-size:12px;line-height:14px;">01.09.2025</div>
<div class="dinp" style="position:absolute;left:1046px;top:693px;width:90px;height:24px;"></div>
<div class="t " style="left:1050.5px;top:698px;font-size:12px;line-height:14px;">26.09.2025</div>
<div class="t " style="left:1248px;top:698px;font-size:12px;line-height:14px;">in process</div>
<div class="t " style="left:1382px;top:698px;font-size:12px;line-height:14px;">Vorläufig</div>
<div class="t " style="left:1551px;top:698px;font-size:12px;line-height:14px;">.00</div>
<div style="position:absolute;left:1572.5px;top:696px;width:17px;height:17px"><svg width="17" height="17" viewBox="0 0 17 17"><rect x="0" y="0" width="17" height="17" fill="#ededed"/><path d="M0.9 16.1 L2.1 11.6 L12.6 1.1 Q14.1 -0.1 15.6 1.4 Q17.1 2.9 15.9 4.4 L5.4 14.9 Z M11.3 2.4 L14.6 5.7 M2.1 11.6 L5.4 14.9" fill="#fff" fill-opacity=".35" stroke="#58a8f0" stroke-width="1.15" stroke-linejoin="round"/></svg></div>
<div class="t " style="left:1704.5px;top:698px;font-size:12px;line-height:14px;">Not available</div>
<div class="btn" style="left:1789px;top:693px;width:74px;height:23px;font-size:13.333px;line-height:23px">Actions <span style="font-size:12px;-webkit-text-stroke:0.35px #000;position:relative;top:-0.5px">▽</span></div>
<div class="" style="position:absolute;left:258px;top:723px;width:1617px;height:36px;background:#e4f1fb"></div>
<div class="cb" style="left:262.5px;top:735px;width:12px;height:12px"></div>
<div class="t " style="left:343px;top:734px;font-size:12px;line-height:14px;">986787</div>
<div class="t " style="left:411.5px;top:727px;font-size:12px;line-height:14px;">MKLTST_SAPGR_LF_WARTUNG_4_G0</div>
<div class="t " style="left:411.5px;top:741px;font-size:12px;line-height:14px;">4</div>
<div class="t " style="left:642px;top:734px;font-size:12px;line-height:14px;">4440001104</div>
<div class="t " style="left:759.5px;top:734px;font-size:12px;line-height:14px;">GEWRK01</div>
<div class="t " style="left:860px;top:734px;font-size:12px;line-height:14px;">301</div>
<div class="dinp" style="position:absolute;left:929px;top:729px;width:90px;height:24px;"></div>
<div class="t " style="left:933.5px;top:734px;font-size:12px;line-height:14px;">01.09.2025</div>
<div class="dinp" style="position:absolute;left:1046px;top:729px;width:90px;height:24px;"></div>
<div class="t " style="left:1050.5px;top:734px;font-size:12px;line-height:14px;">26.09.2025</div>
<div class="t " style="left:1248px;top:734px;font-size:12px;line-height:14px;">in process</div>
<div class="t " style="left:1382px;top:734px;font-size:12px;line-height:14px;">Vorläufig</div>
<div class="t " style="left:1551px;top:734px;font-size:12px;line-height:14px;">.00</div>
<div style="position:absolute;left:1572.5px;top:732px;width:17px;height:17px"><svg width="17" height="17" viewBox="0 0 17 17"><rect x="0" y="0" width="17" height="17" fill="#ededed"/><path d="M0.9 16.1 L2.1 11.6 L12.6 1.1 Q14.1 -0.1 15.6 1.4 Q17.1 2.9 15.9 4.4 L5.4 14.9 Z M11.3 2.4 L14.6 5.7 M2.1 11.6 L5.4 14.9" fill="#fff" fill-opacity=".35" stroke="#58a8f0" stroke-width="1.15" stroke-linejoin="round"/></svg></div>
<div class="t " style="left:1704.5px;top:734px;font-size:12px;line-height:14px;">Not available</div>
<div class="btn" style="left:1789px;top:729px;width:74px;height:23px;font-size:13.333px;line-height:23px">Actions <span style="font-size:12px;-webkit-text-stroke:0.35px #000;position:relative;top:-0.5px">▽</span></div>
<div class="cb" style="left:262.5px;top:769px;width:12px;height:12px"></div>
<div class="t " style="left:343px;top:768px;font-size:12px;line-height:14px;">986807</div>
<div class="t " style="left:411.5px;top:768px;font-size:12px;line-height:14px;">MKLTST_SAPGR_FILTERTEST_2_G02</div>
<div class="t " style="left:642px;top:768px;font-size:12px;line-height:14px;">4440000302</div>
<div class="t " style="left:759.5px;top:768px;font-size:12px;line-height:14px;">GEWRK01</div>
<div class="t " style="left:860px;top:768px;font-size:12px;line-height:14px;">205</div>
<div class="dinp" style="position:absolute;left:929px;top:763px;width:90px;height:24px;"></div>
<div class="t " style="left:933.5px;top:768px;font-size:12px;line-height:14px;">02.09.2025</div>
<div class="dinp" style="position:absolute;left:1046px;top:763px;width:90px;height:24px;"></div>
<div class="t " style="left:1050.5px;top:768px;font-size:12px;line-height:14px;">27.09.2025</div>
<div class="t " style="left:1163px;top:768px;font-size:12px;line-height:14px;">O</div>
<div class="t " style="left:1248px;top:768px;font-size:12px;line-height:14px;">in process</div>
<div class="t " style="left:1382px;top:768px;font-size:12px;line-height:14px;">Vorläufig</div>
<div class="t " style="left:1551px;top:768px;font-size:12px;line-height:14px;">.00</div>
<div style="position:absolute;left:1572.5px;top:766px;width:17px;height:17px"><svg width="17" height="17" viewBox="0 0 17 17"><rect x="0" y="0" width="17" height="17" fill="#ededed"/><path d="M0.9 16.1 L2.1 11.6 L12.6 1.1 Q14.1 -0.1 15.6 1.4 Q17.1 2.9 15.9 4.4 L5.4 14.9 Z M11.3 2.4 L14.6 5.7 M2.1 11.6 L5.4 14.9" fill="#fff" fill-opacity=".35" stroke="#58a8f0" stroke-width="1.15" stroke-linejoin="round"/></svg></div>
<div class="t " style="left:1704.5px;top:768px;font-size:12px;line-height:14px;">Not available</div>
<div class="btn" style="left:1789px;top:763px;width:74px;height:23px;font-size:13.333px;line-height:23px">Actions <span style="font-size:12px;-webkit-text-stroke:0.35px #000;position:relative;top:-0.5px">▽</span></div>
<div class="" style="position:absolute;left:258px;top:791px;width:1617px;height:31px;background:#e4f1fb"></div>
<div class="cb" style="left:262.5px;top:800px;width:12px;height:12px"></div>
<div class="t " style="left:343px;top:799px;font-size:12px;line-height:14px;">986809</div>
<div class="t " style="left:411.5px;top:799px;font-size:12px;line-height:14px;">MKLTST_SAPGR_FILTERTEST_3_G03</div>
<div class="t " style="left:642px;top:799px;font-size:12px;line-height:14px;">4440000303</div>
<div class="t " style="left:759.5px;top:799px;font-size:12px;line-height:14px;">GEWRK01</div>
<div class="t " style="left:860px;top:799px;font-size:12px;line-height:14px;">205</div>
<div class="dinp" style="position:absolute;left:929px;top:795px;width:90px;height:23px;"></div>
<div class="t " style="left:933.5px;top:799px;font-size:12px;line-height:14px;">02.09.2025</div>
<div class="dinp" style="position:absolute;left:1046px;top:795px;width:90px;height:23px;"></div>
<div class="t " style="left:1050.5px;top:799px;font-size:12px;line-height:14px;">27.09.2025</div>
<div class="t " style="left:1163px;top:799px;font-size:12px;line-height:14px;">O</div>
<div class="t " style="left:1248px;top:799px;font-size:12px;line-height:14px;">in process</div>
<div class="t " style="left:1382px;top:799px;font-size:12px;line-height:14px;">Vorläufig</div>
<div class="t " style="left:1551px;top:799px;font-size:12px;line-height:14px;">.00</div>
<div style="position:absolute;left:1572.5px;top:797px;width:17px;height:17px"><svg width="17" height="17" viewBox="0 0 17 17"><rect x="0" y="0" width="17" height="17" fill="#ededed"/><path d="M0.9 16.1 L2.1 11.6 L12.6 1.1 Q14.1 -0.1 15.6 1.4 Q17.1 2.9 15.9 4.4 L5.4 14.9 Z M11.3 2.4 L14.6 5.7 M2.1 11.6 L5.4 14.9" fill="#fff" fill-opacity=".35" stroke="#58a8f0" stroke-width="1.15" stroke-linejoin="round"/></svg></div>
<div class="t " style="left:1704.5px;top:799px;font-size:12px;line-height:14px;">Not available</div>
<div class="btn" style="left:1789px;top:795px;width:74px;height:23px;font-size:13.333px;line-height:23px">Actions <span style="font-size:12px;-webkit-text-stroke:0.35px #000;position:relative;top:-0.5px">▽</span></div>
<div style="position:absolute;left:1875px;top:549px;width:15px;height:277px;background:#fcfcfc"><svg style="position:absolute;left:3px;top:4px" width="9" height="7" viewBox="0 0 9 7"><path d="M4.5 0 L8.7 5.3 Q9.4 7 7.9 7 L1.1 7 Q-0.4 7 0.3 5.3 Z" fill="#8b8b8b"/></svg><div style="position:absolute;left:3px;top:114px;width:9px;height:21px;border-radius:4.5px;background:#8b8b8b"></div><svg style="position:absolute;left:3px;bottom:4px" width="9" height="7" viewBox="0 0 9 7"><path d="M4.5 7 L8.7 1.7 Q9.4 0 7.9 0 L1.1 0 Q-0.4 0 0.3 1.7 Z" fill="#8b8b8b"/></svg></div>
<div class="t " style="left:257px;top:837px;font-size:12px;line-height:14px;">Perform SAP-confirmation for:</div>
<svg style="position:absolute;left:262.0px;top:858.5px" width="13" height="13" viewBox="0 0 13 13"><circle cx="6.5" cy="6.5" r="5.9" fill="#fff" stroke="#0078d4" stroke-width="1.05"/><circle cx="6.5" cy="6.5" r="3.6" fill="#0078d4"/></svg>
<div class="t " style="left:283px;top:857px;font-size:12px;line-height:14px;">Selected SAP orders</div>
<svg style="position:absolute;left:262.0px;top:880.0px" width="13" height="13" viewBox="0 0 13 13"><circle cx="6.5" cy="6.5" r="5.9" fill="#fff" stroke="#767676" stroke-width="1.1"/></svg>
<div class="t " style="left:283px;top:878px;font-size:12px;line-height:14px;">Every SAP order with result O</div>
<svg style="position:absolute;left:262.0px;top:900.5px" width="13" height="13" viewBox="0 0 13 13"><circle cx="6.5" cy="6.5" r="5.9" fill="#fff" stroke="#767676" stroke-width="1.1"/></svg>
<div class="t " style="left:283px;top:899px;font-size:12px;line-height:14px;">All SAP orders</div>
<div class="btn" style="left:257px;top:938px;width:185px;height:21px;font-size:13.333px;line-height:19px">Report/transfer to SAP</div>
<div class="t " style="left:737px;top:874px;font-size:25px;line-height:28px;transform:scaleX(0.86);transform-origin:0 50%;">«</div>
<svg style="position:absolute;left:820px;top:882px" width="16" height="18" viewBox="0 0 16 18"><path d="M0.2 9.4 L15.2 0.9 L10.8 9.4 L15.2 17.8 Z" fill="#c8c8c8"/></svg>
<div class="t " style="left:906.3px;top:874px;font-size:23.3px;line-height:28px;color:#0000f0;font-weight:bold;clip-path:polygon(0 0,100% 0,100% 19px,9.1px 19px,9.1px 100%,5.2px 100%,5.2px 19px,0 19px);">1</div>
<svg style="position:absolute;left:988px;top:882px" width="16" height="18" viewBox="0 0 16 18"><path d="M15.4 9.4 L0.4 0.9 L4.8 9.4 L0.4 17.8 Z" fill="#000"/></svg>
<div class="t " style="left:791px;top:936px;font-size:14.2px;line-height:18px;">Displayed row:</div>
<div class="sel" style="left:900px;top:937px;width:49px;height:20px;font-size:16px;line-height:20px;padding-left:4.5px">100<svg class="chev" width="10" height="6" viewBox="0 0 10 6"><path d="M1 1 L5 5 L9 1" fill="none" stroke="#000" stroke-width="1.8" stroke-linecap="round" stroke-linejoin="round"/></svg></div>
</div>
</body>
</html>
